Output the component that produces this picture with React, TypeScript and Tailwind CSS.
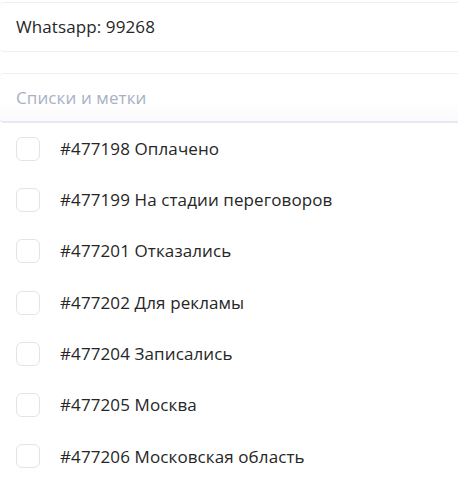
import React from 'react';

const tags = [
  { id: 477198, name: 'Оплачено' },
  { id: 477199, name: 'На стадии переговоров' },
  { id: 477201, name: 'Отказались' },
  { id: 477202, name: 'Для рекламы' },
  { id: 477204, name: 'Записались' },
  { id: 477205, name: 'Москва' },
  { id: 477206, name: 'Московская область' },
];

export default function App() {
  return (
    <div className="w-[458px] h-[489px] bg-white overflow-hidden font-['Open_Sans',sans-serif] text-[17px] tracking-[0.1px] text-[#262626]">
      <div className="pt-[2px]">
        <div className="h-[50px] flex items-center px-4 border-t border-b border-[#eeeff4] rounded-l-[4px]">
          Whatsapp: 99268
        </div>
      </div>
      <div className="pt-[21px]">
        <div className="h-[50px] flex items-center px-4 border-t border-[#eeeff4] border-b-2 border-b-[#e6e9f2] rounded-l-[4px] bg-gradient-to-b from-white from-60% to-[#fafafc] text-[#a7b1c4]">
          Списки и метки
        </div>
      </div>
      <div>
        {tags.map((t) => (
          <div key={t.id} className="h-[51.3px] flex items-center px-4 gap-5">
            <div className="w-6 h-6 rounded-[6px] border-[1.5px] border-[#e4e4e4] bg-white shrink-0" />
            <span>
              #{t.id} {t.name}
            </span>
          </div>
        ))}
      </div>
    </div>
  );
}
